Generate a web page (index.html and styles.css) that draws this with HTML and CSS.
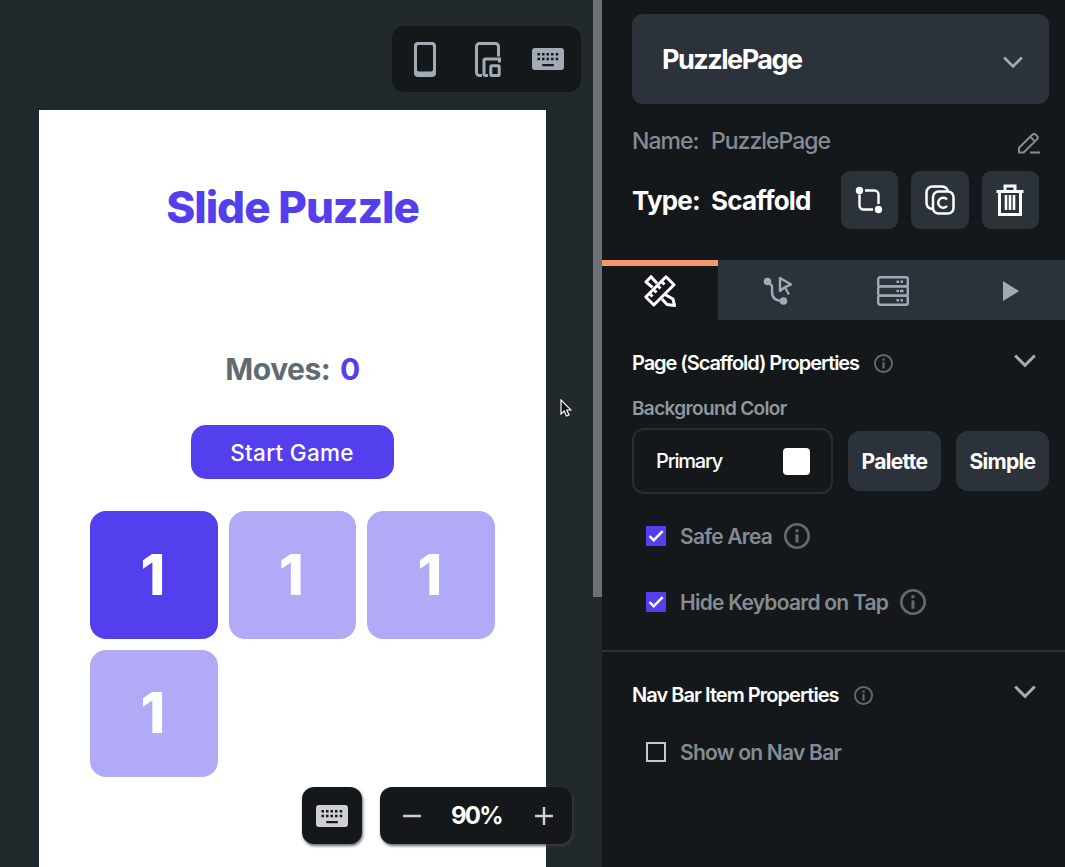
FILE: index.html
```html
<!DOCTYPE html>
<html lang="en">
<head>
    <meta charset="UTF-8">
    <meta name="viewport" content="width=device-width, initial-scale=1.0">
    <title>PuzzlePage</title>
    <link rel="stylesheet" href="styles.css">
</head>
<body>
    <!-- Shared icons -->
    <svg class="sprite" width="0" height="0">
        <symbol id="icon-keyboard" viewBox="0 0 32 22">
            <path fill="currentColor" fill-rule="evenodd" d="M3 0h26a3 3 0 0 1 3 3v16a3 3 0 0 1-3 3H3a3 3 0 0 1-3-3V3a3 3 0 0 1 3-3zM5.500 5v2.500h2.500v-2.500zM10 5v2.500h2.500v-2.500zM14.500 5v2.500h2.500v-2.500zM19 5v2.500h2.500v-2.500zM23.700 5v2.500h2.500v-2.500zM5.500 9.700v2.500h2.500v-2.500zM10 9.700v2.500h2.500v-2.500zM14.500 9.700v2.500h2.500v-2.500zM19 9.700v2.500h2.500v-2.500zM23.700 9.700v2.500h2.500v-2.500zM10.300 16v2.200h11.500v-2.200z"/>
        </symbol>
        <symbol id="icon-chevron" viewBox="0 0 22 14">
            <path fill="none" stroke="currentColor" stroke-width="3" d="M1.200 1.500 11 11.300 20.800 1.500"/>
        </symbol>
        <symbol id="icon-info" viewBox="0 0 24 24">
            <circle cx="12" cy="12" r="10.800" fill="none" stroke="currentColor" stroke-width="2.400"/>
            <path fill="currentColor" d="M10.600 5.800h2.800v2.800h-2.800zM10.600 10.300h2.800v8h-2.800z"/>
        </symbol>
    </svg>

    <main class="builder">
        <section class="canvas">
            <div class="device-bar">
                <svg class="icon-phone" viewBox="0 0 22 35">
                    <path fill="currentColor" fill-rule="evenodd" d="M4 0h14a4 4 0 0 1 4 4v27a4 4 0 0 1-4 4H4a4 4 0 0 1-4-4V4a4 4 0 0 1 4-4zM4.500 3A1.500 1.500 0 0 0 3 4.500V27.500a2 2 0 0 0 2 2h12a2 2 0 0 0 2-2V4.500A1.500 1.500 0 0 0 17.500 3z"/>
                </svg>
                <svg class="icon-devices" viewBox="0 0 26 35" fill="none" stroke="currentColor" stroke-width="3">
                    <path d="M23.500 14.500V4.500a3 3 0 0 0-3-3H4.500a3 3 0 0 0-3 3v26a3 3 0 0 0 3 3H7"/>
                    <path d="M24.500 20.500V17H10.500a1.500 1.500 0 0 0-1.500 1.500v13.500a1.500 1.500 0 0 0 1.500 1.500h2.500"/>
                    <rect x="15.800" y="23.800" width="8.400" height="9.700" rx="1"/>
                </svg>
                <svg class="icon-keyboard"><use href="#icon-keyboard"/></svg>
            </div>

            <div class="phone">
                <h1 class="title">Slide Puzzle</h1>
                <p class="moves">Moves: <span class="moves-count">0</span></p>
                <button class="start-button" type="button"><span>Start Game</span></button>
                <div class="tiles">
                    <div class="tile active">1</div>
                    <div class="tile">1</div>
                    <div class="tile">1</div>
                    <div class="tile">1</div>
                </div>
            </div>

            <div class="scrollbar"></div>

            <div class="zoom-controls">
                <button class="keyboard-button" type="button" aria-label="Keyboard">
                    <svg class="icon-keyboard"><use href="#icon-keyboard"/></svg>
                </button>
                <div class="zoom-box">
                    <svg class="icon-zoom" viewBox="0 0 18 18"><path d="M0 9h18"/></svg>
                    <span class="zoom-value">90%</span>
                    <svg class="icon-zoom" viewBox="0 0 18 18"><path d="M0 9h18M9 0v18"/></svg>
                </div>
            </div>

            <svg class="cursor" viewBox="0 0 12 18">
                <path d="M1 1v14l3.300-3 2.200 5 2.500-1-2.200-5H11z"/>
            </svg>
        </section>

        <aside class="panel">
            <div class="page-select">
                <span class="page-select-name">PuzzlePage</span>
                <svg class="select-arrow"><use href="#icon-chevron"/></svg>
            </div>

            <div class="name-row">
                <span class="name-label">Name:</span>
                <span class="name-value">PuzzlePage</span>
                <svg class="icon-edit" viewBox="0 0 22 21" fill="none" stroke="currentColor" stroke-width="2" stroke-linejoin="round">
                    <path d="M1 19.500v-4.700L14.300 1.700a2.500 2.500 0 0 1 3.500 0l1.200 1.200a2.500 2.500 0 0 1 0 3.500L5.700 19.500zM12.300 3.800l4.600 4.600M12 19.500h10"/>
                </svg>
            </div>

            <div class="type-row">
                <span class="type-label">Type:</span>
                <span class="type-value">Scaffold</span>
                <div class="actions">
                    <button class="action" type="button" aria-label="Wrap">
                        <svg width="28" height="28" viewBox="0 0 28 28" fill="none" stroke="currentColor" stroke-width="2.400">
                            <path d="M4.500 8.500v11a4 4 0 0 0 4 4h9.500M10 4.500h9.500a4 4 0 0 1 4 4v9.500"/>
                            <circle cx="4.500" cy="4.500" r="3.700" fill="currentColor" stroke="none"/>
                            <circle cx="23.500" cy="23.500" r="3.700" fill="currentColor" stroke="none"/>
                        </svg>
                    </button>
                    <button class="action" type="button" aria-label="Copy">
                        <svg width="30" height="30" viewBox="0 0 30 30" fill="none" stroke="currentColor" stroke-width="2.500">
                            <rect x="8" y="6.500" width="20.500" height="22" rx="5.500"/>
                            <path d="M7.500 24C3.500 23.500 1.500 21.500 1.500 17.500V7.500a6 6 0 0 1 6-6h9c3.500 0 5.500 1.500 6.500 4.500"/>
                            <path d="M22 14.500a5 5 0 1 0 0 6.500"/>
                        </svg>
                    </button>
                    <button class="action" type="button" aria-label="Delete">
                        <svg width="28" height="32" viewBox="0 0 28 32" fill="none" stroke="currentColor" stroke-width="3">
                            <path d="M.5 7.500h27M9 7V2h10v5M3.500 7v23.500h21V7"/>
                            <path stroke-width="2.600" d="M10 11v15M14 11v15M18 11v15"/>
                        </svg>
                    </button>
                </div>
            </div>

            <nav class="tabs">
                <div class="tab selected">
                    <svg width="32" height="32" viewBox="0 0 32 32" fill="none" stroke="currentColor" stroke-width="3" stroke-linejoin="round">
                        <path d="M22 1.800 30 9.800 9.800 30 1.800 22z"/>
                        <path d="M17.500 6.500l3 3M13.500 10.500l3 3M9.500 14.500l3 3M5.500 18.500l3 3"/>
                        <path d="M8.500 12.300 2 7 7 1.700l6 6.500M21 19.500l8 4.500 1.500 6.500-7.500-1-5-5.500"/>
                    </svg>
                </div>
                <div class="tab">
                    <svg class="icon-actions" width="30" height="30" viewBox="0 0 30 30" fill="none" stroke="currentColor" stroke-width="2.400" stroke-linejoin="round">
                        <circle cx="4.500" cy="5.500" r="3.800" fill="currentColor" stroke="none"/>
                        <circle cx="20.500" cy="25" r="3.800" fill="currentColor" stroke="none"/>
                        <path d="M4.500 6c6 3 4.500 6 4.500 10 0 6 4 9 11 9"/>
                        <path d="M17 2v13l4-3.300 7-3.200zM22 11.500l4 7"/>
                    </svg>
                </div>
                <div class="tab">
                    <svg class="icon-data" width="32" height="30" viewBox="1 0 32 30" fill="none" stroke="currentColor" stroke-width="2.400">
                        <rect x="2.200" y="1.200" width="29.600" height="9.200" rx="2"/>
                        <rect x="2.200" y="10.400" width="29.600" height="9.200" rx="2"/>
                        <rect x="2.200" y="19.600" width="29.600" height="9.200" rx="2"/>
                        <path d="M20.500 5.800h2.500M24.500 5.800h2.500M20.500 15h2.500M24 15h3.500M20.500 24.200h2.500M24.500 24.200h2.500"/>
                    </svg>
                </div>
                <div class="tab">
                    <svg width="16" height="20" viewBox="0 0 16 20"><path fill="currentColor" d="M0 0l16 10-16 10z"/></svg>
                </div>
            </nav>

            <section class="properties">
                <div class="section-header">
                    <h2 class="heading-page">Page (Scaffold) Properties</h2>
                    <svg class="icon-info"><use href="#icon-info"/></svg>
                    <svg class="section-arrow"><use href="#icon-chevron"/></svg>
                </div>
                <div class="field-label"><span>Background Color</span></div>
                <div class="color-row">
                    <div class="color-field">
                        <span class="color-name">Primary</span>
                        <span class="swatch"></span>
                    </div>
                    <button class="mode-button" type="button">Palette</button>
                    <button class="mode-button simple" type="button">Simple</button>
                </div>
                <div class="check-row">
                    <span class="checkbox checked"><svg viewBox="0 0 20 20"><path d="M3.500 10l4.200 4.200 9-9"/></svg></span>
                    <span>Safe Area</span>
                    <svg class="icon-info large"><use href="#icon-info"/></svg>
                </div>
                <div class="check-row">
                    <span class="checkbox checked"><svg viewBox="0 0 20 20"><path d="M3.500 10l4.200 4.200 9-9"/></svg></span>
                    <span>Hide Keyboard on Tap</span>
                    <svg class="icon-info large"><use href="#icon-info"/></svg>
                </div>
            </section>

            <section class="properties nav-properties">
                <div class="section-header">
                    <h2 class="heading-nav">Nav Bar Item Properties</h2>
                    <svg class="icon-info"><use href="#icon-info"/></svg>
                    <svg class="section-arrow"><use href="#icon-chevron"/></svg>
                </div>
                <div class="check-row">
                    <span class="checkbox"></span>
                    <span>Show on Nav Bar</span>
                </div>
            </section>
        </aside>
    </main>
</body>
</html>
```
FILE: styles.css
```css
* {
    box-sizing: border-box;
}
body {
    margin: 0;
    font-family: Inter, "Open Sans", sans-serif;
    background: #14181b;
    color: #fff;
}
h1, h2, p {
    margin: 0;
}
button {
    border: none;
    padding: 0;
    font-family: inherit;
    color: inherit;
}
svg {
    display: block;
    flex-shrink: 0;
}
.sprite {
    position: absolute;
}
.builder {
    display: flex;
    height: 867px;
    overflow: hidden;
    white-space: nowrap;
}

/* Canvas */
.canvas {
    position: relative;
    display: flex;
    flex-direction: column;
    width: 602px;
    padding: 26px 21px 0 39px;
    background: #22292c;
    flex-shrink: 0;
}
.device-bar {
    align-self: flex-end;
    display: flex;
    align-items: center;
    justify-content: space-between;
    width: 189px;
    height: 66px;
    padding: 0 17px 0 22px;
    border-radius: 12px;
    background: #14181b;
    color: #a0abb6;
    flex-shrink: 0;
}
.icon-phone {
    width: 22px;
    height: 35px;
}
.icon-devices {
    width: 26px;
    height: 35px;
    margin-left: 8px;
}
.icon-keyboard {
    width: 32px;
    height: 22px;
}
.phone {
    display: flex;
    flex-direction: column;
    align-items: center;
    width: 507px;
    height: 757px;
    margin-top: 18px;
    padding-top: 67px;
    background: #fff;
    flex-shrink: 0;
}
.title {
    font-size: 44px;
    line-height: 60px;
    font-weight: 800;
    letter-spacing: -1px;
    color: #543fee;
}
.moves {
    margin-top: 112px;
    font-size: 30px;
    line-height: 40px;
    font-weight: 700;
    letter-spacing: -0.5px;
    word-spacing: 3px;
    color: #5f6b73;
}
.moves-count {
    color: #543fee;
}
.start-button {
    width: 203px;
    height: 54px;
    margin: 36px 1px 0 0;
    border-radius: 15px;
    background: #543fee;
    font-size: 22.500px;
    font-weight: 500;
    letter-spacing: 0.3px;
}
.tiles {
    align-self: flex-start;
    display: grid;
    grid-template-columns: repeat(3, 127.500px);
    grid-auto-rows: 127.500px;
    gap: 11px;
    margin: 32px 0 0 51px;
}
.tile {
    display: flex;
    align-items: center;
    justify-content: center;
    padding-right: 2px;
    border-radius: 16px;
    background: #b1aaf7;
    font-size: 56px;
    font-weight: 800;
}
.tile.active {
    background: #543fee;
}
.scrollbar {
    position: absolute;
    top: 0;
    right: 0;
    width: 9px;
    height: 597px;
    background: #6c7175;
}
.zoom-controls {
    position: absolute;
    left: 302px;
    top: 787px;
    display: flex;
    gap: 18px;
}
.keyboard-button, .zoom-box {
    display: flex;
    align-items: center;
    height: 57px;
    border-radius: 12px;
    background: #14181b;
    box-shadow: 1px 2px 3px rgba(70, 65, 80, 0.8);
}
.keyboard-button {
    justify-content: center;
    width: 60px;
    color: #d0cfd6;
}
.zoom-box {
    justify-content: space-between;
    width: 192px;
    padding: 0 19px 0 23px;
}
.icon-zoom {
    width: 18px;
    height: 18px;
    stroke: #d0cfd6;
    stroke-width: 2.500;
}
.zoom-value {
    margin-right: 3px;
    font-size: 24px;
    font-weight: 700;
    letter-spacing: -1.7px;
}
.cursor {
    position: absolute;
    left: 560px;
    top: 399px;
    width: 12px;
    height: 18px;
    fill: #111;
    stroke: #fff;
    stroke-width: 1.200;
}

/* Properties panel */
.panel {
    width: 463px;
    padding-top: 14px;
    background: #14181b;
}
.page-select {
    display: flex;
    align-items: center;
    justify-content: space-between;
    height: 90px;
    margin: 0 16px 0 30px;
    padding: 0 26px 0 30px;
    border-radius: 11px;
    background: #2b323a;
}
.page-select-name {
    font-size: 27px;
    font-weight: 700;
    letter-spacing: -1.5px;
}
.select-arrow {
    width: 20px;
    height: 13px;
    margin-top: 6px;
    color: #a0abb6;
}
.name-row {
    display: flex;
    align-items: center;
    height: 40px;
    margin-top: 17px;
    padding: 0 25px 0 30px;
    font-size: 23px;
    font-weight: 500;
    letter-spacing: -1px;
    color: #858b92;
}
.name-label, .type-label {
    width: 79px;
}
.icon-edit {
    width: 22px;
    height: 21px;
    margin: 4px 0 0 auto;
}
.type-row {
    display: flex;
    align-items: center;
    height: 58px;
    margin-top: 10px;
    padding: 0 26px 0 30px;
    font-size: 26px;
    font-weight: 700;
    letter-spacing: -0.8px;
}
.actions {
    display: flex;
    gap: 13px;
    margin-left: auto;
}
.action {
    display: flex;
    align-items: center;
    justify-content: center;
    width: 57.500px;
    height: 57.500px;
    border-radius: 9px;
    background: #2b323a;
}
.tabs {
    display: flex;
    height: 60px;
    margin-top: 31px;
    background: #2b323a;
    color: #a0abb6;
    overflow: hidden;
}
.tab {
    display: flex;
    align-items: center;
    justify-content: center;
    width: 117px;
    padding-top: 1px;
    flex-shrink: 0;
}
.tab.selected {
    width: 116px;
    border-top: 6px solid #f5956a;
    padding: 0 0 4px;
    background: #14181b;
    color: #fff;
}
.icon-actions {
    margin-left: 3px;
}
.icon-data {
    margin-right: 2px;
}
.properties {
    padding: 25px 16px 0 30px;
}
.section-header {
    display: flex;
    align-items: center;
    height: 36px;
}
.section-header h2 {
    font-size: 20px;
    font-weight: 600;
}
.heading-page {
    letter-spacing: -1.060px;
}
.heading-nav {
    letter-spacing: -0.960px;
}
.icon-info {
    width: 19px;
    height: 19px;
    margin-left: 15px;
    color: #606a73;
    overflow: visible;
}
.icon-info.large {
    width: 26px;
    height: 26px;
    margin-left: 12px;
}
.section-arrow {
    width: 22px;
    height: 14px;
    margin: 0 13px 4px auto;
    color: #a0abb6;
}
.field-label {
    display: flex;
    align-items: center;
    height: 40px;
    margin-top: 7px;
    font-size: 19px;
    font-weight: 600;
    letter-spacing: -0.650px;
    color: #8f979f;
}
.color-row {
    display: flex;
    align-items: center;
    height: 66px;
}
.color-field {
    display: flex;
    align-items: center;
    justify-content: space-between;
    width: 201px;
    height: 66px;
    margin-right: 15px;
    padding: 0 21px 0 22px;
    border: 2px solid #262d34;
    border-radius: 12px;
    font-size: 20px;
    font-weight: 500;
    letter-spacing: -1.200px;
}
.swatch {
    width: 27px;
    height: 27px;
    border-radius: 4px;
    background: #fff;
}
.mode-button {
    height: 60px;
    width: 93.500px;
    border-radius: 12px;
    background: #2b323a;
    font-size: 21px;
    font-weight: 700;
    letter-spacing: -0.700px;
}
.simple {
    margin-left: 14.500px;
}
.check-row {
    display: flex;
    align-items: center;
    height: 66px;
    padding-left: 14px;
    font-size: 21px;
    font-weight: 600;
    letter-spacing: -0.750px;
    color: #858b92;
}
.color-row + .check-row {
    margin-top: 9px;
}
.section-header + .check-row {
    margin-top: 6px;
}
.checkbox {
    width: 20px;
    height: 20px;
    margin-right: 14px;
    border: 2px solid #c6c9cc;
}
.checkbox.checked {
    border: none;
    background: #543fee;
}
.checkbox path {
    fill: none;
    stroke: #fff;
    stroke-width: 2.400;
}
.nav-properties {
    margin-top: 15px;
    border-top: 2px solid #2b323a;
}
.nav-properties .section-arrow {
    margin-bottom: 7px;
}
```
